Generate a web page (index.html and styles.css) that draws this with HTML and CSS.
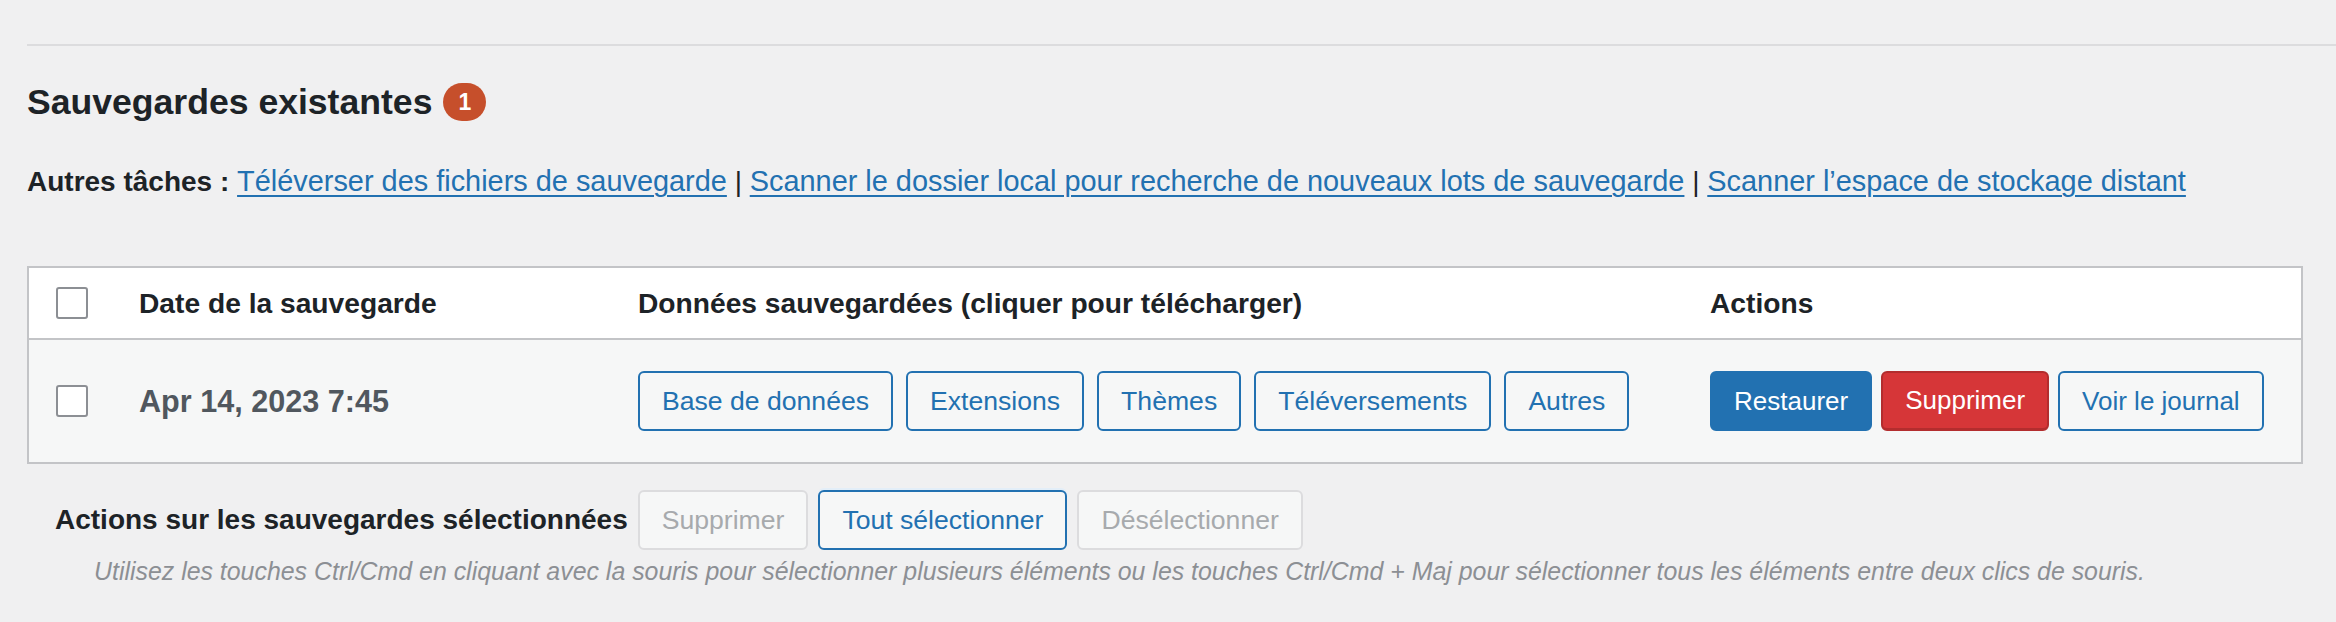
FILE: index.html
```html
<!DOCTYPE html>
<html lang="fr">
<head>
<meta charset="utf-8">
<title>Sauvegardes existantes</title>
<link rel="stylesheet" href="styles.css">
</head>
<body>
<div class="wrap">
  <hr class="sep">
  <h2 class="title">Sauvegardes existantes <span class="badge">1</span></h2>
  <p class="tasks"><strong>Autres tâches :</strong> <a href="#">Téléverser des fichiers de sauvegarde</a> | <a href="#">Scanner le dossier local pour recherche de nouveaux lots de sauvegarde</a> | <a href="#">Scanner l’espace de stockage distant</a></p>

  <div class="table">
    <div class="thead">
      <div class="cell cb"><input type="checkbox" class="check"></div>
      <div class="cell th">Date de la sauvegarde</div>
      <div class="cell th">Données sauvegardées (cliquer pour télécharger)</div>
      <div class="cell th">Actions</div>
    </div>
    <div class="trow">
      <div class="cell cb"><input type="checkbox" class="check"></div>
      <div class="cell date">Apr 14, 2023 7:45</div>
      <div class="cell data">
        <button class="btn">Base de données</button>
        <button class="btn">Extensions</button>
        <button class="btn">Thèmes</button>
        <button class="btn">Téléversements</button>
        <button class="btn">Autres</button>
      </div>
      <div class="cell actions">
        <button class="btn btn-primary">Restaurer</button>
        <button class="btn btn-danger">Supprimer</button>
        <button class="btn">Voir le journal</button>
      </div>
    </div>
  </div>

  <div class="bulk">
    <span class="bulk-label">Actions sur les sauvegardes sélectionnées</span>
    <button class="btn btn-disabled">Supprimer</button>
    <button class="btn btn-focus">Tout sélectionner</button>
    <button class="btn btn-disabled">Désélectionner</button>
  </div>
  <p class="hint">Utilisez les touches Ctrl/Cmd en cliquant avec la souris pour sélectionner plusieurs éléments ou les touches Ctrl/Cmd + Maj pour sélectionner tous les éléments entre deux clics de souris.</p>
</div>
</body>
</html>
```

FILE: styles.css
```css
html, body {
  margin: 0;
  background: #f0f0f1;
}

body {
  font-family: "Liberation Sans", Arial, sans-serif;
  font-size: 28px;
  color: #3c434a;
}

.wrap {
  padding: 44px 33px 0 27px;
}

.sep {
  height: 2px;
  margin: 0 -33px 0 0;
  border: 0;
  background: #dcdcde;
}

.title {
  display: flex;
  align-items: center;
  gap: 11px;
  margin: 35px 0 0;
  font-size: 35.6px;
  line-height: 42px;
  font-weight: 700;
  color: #1d2327;
}

.badge {
  display: inline-flex;
  align-items: center;
  justify-content: center;
  width: 43px;
  height: 38px;
  border-radius: 19px;
  background: #c64f2b;
  color: #fff;
  font-size: 23px;
  line-height: 1;
}

.tasks {
  margin: 37px 0 0;
  line-height: 42px;
  color: #1d2327;
}

.tasks strong {
  font-weight: 700;
}

.tasks a {
  font-size: 28.9px;
  color: #2271b1;
  text-decoration: underline;
  text-decoration-thickness: 2px;
  text-underline-offset: 4px;
}

.table {
  margin-top: 63px;
  border: 2px solid #c3c4c7;
  background: #fff;
}

.thead,
.trow {
  display: grid;
  grid-template-columns: 110px 499px 1072px 1fr;
  align-items: center;
}

.thead {
  height: 70px;
  border-bottom: 2px solid #c3c4c7;
  background: #fff;
}

.trow {
  height: 122px;
  background: #f6f7f7;
}

.cell.cb {
  padding-left: 27px;
  display: flex;
  align-items: center;
}

.check {
  appearance: none;
  -webkit-appearance: none;
  margin: 0;
  width: 32px;
  height: 32px;
  box-sizing: border-box;
  border: 2px solid #8c8f94;
  border-radius: 3px;
  background: #fff;
}

.th {
  font-weight: 700;
  color: #1d2327;
  font-size: 28.2px;
}

.date {
  font-weight: 700;
  font-size: 30.6px;
  color: #50575e;
}

.data {
  display: flex;
  gap: 13px;
}

.actions {
  display: flex;
  gap: 9px;
}

.btn {
  display: inline-flex;
  align-items: center;
  height: 60px;
  box-sizing: border-box;
  margin: 0;
  padding: 0 22px;
  border: 2px solid #2271b1;
  border-radius: 6px;
  background: #f6f7f7;
  color: #2271b1;
  font-family: "Liberation Sans", Arial, sans-serif;
  font-size: 26.6px;
  white-space: nowrap;
}

.actions .btn {
  font-size: 26px;
}

.btn-primary {
  background: #2271b1;
  border-color: #2271b1;
  color: #fff;
}

.btn-danger {
  background: #d63638;
  border-color: #b32d2e;
  border-bottom-width: 3px;
  color: #fff;
}

.btn-disabled {
  border-color: #dcdcde;
  background: #f6f7f7;
  color: #a7aaad;
}

.btn-focus {
  box-shadow: 0 -2px 0 #e3eef8;
}

.bulk {
  display: flex;
  align-items: center;
  gap: 10px;
  margin-top: 26px;
  padding-left: 28px;
}

.bulk-label {
  font-weight: 700;
  font-size: 28px;
  color: #1d2327;
}

.hint {
  margin: 5px 0 0;
  padding-left: 67px;
  font-style: italic;
  font-size: 24.9px;
  line-height: 32px;
  color: #8c8f94;
}
```
